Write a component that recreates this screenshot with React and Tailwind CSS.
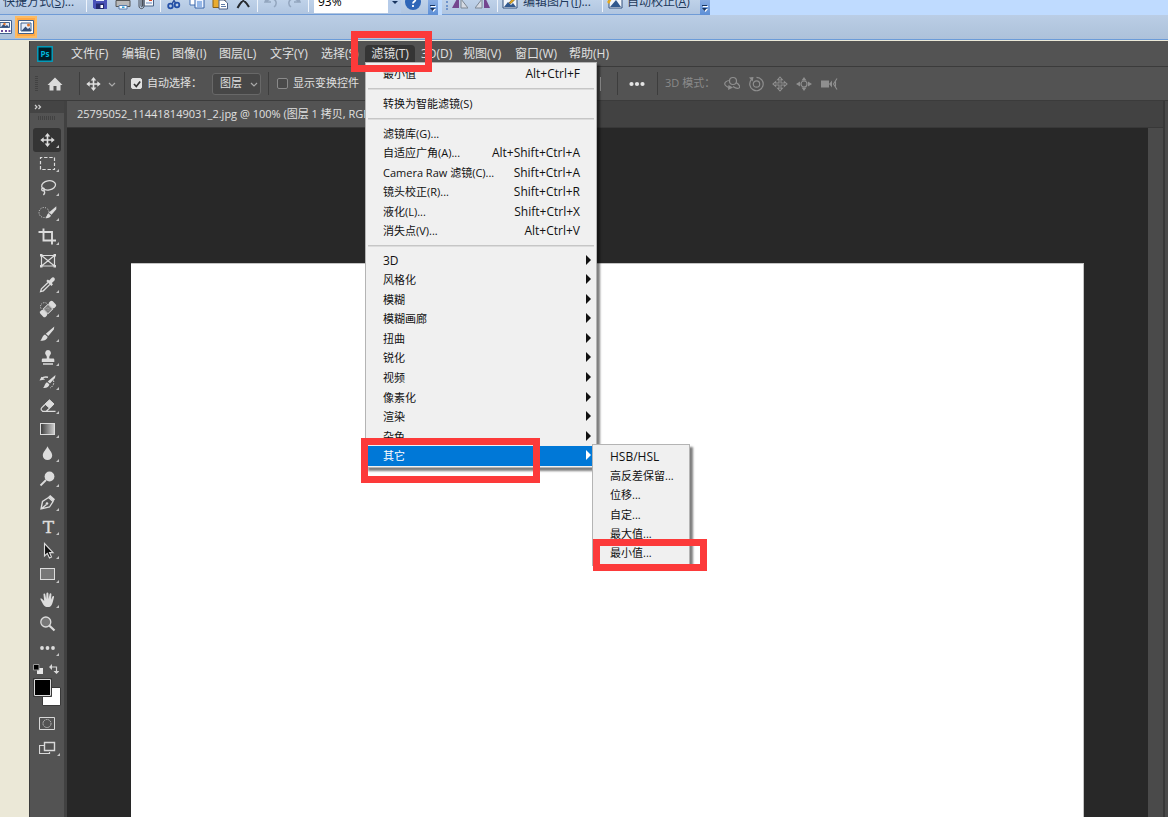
import { useState } from "react";

const menus = [
  { label: "文件(F)", width: "w-[51px]" },
  { label: "编辑(E)", width: "w-[50px]" },
  { label: "图像(I)", width: "w-[47px]" },
  { label: "图层(L)", width: "w-[51px]" },
  { label: "文字(Y)", width: "w-[51px]" },
  { label: "选择(S)", width: "w-[50px]" },
  { label: "滤镜(T)", width: "w-[50px]", open: true },
  { label: "3D(D)", width: "w-[42px]" },
  { label: "视图(V)", width: "w-[52px]" },
  { label: "窗口(W)", width: "w-[54px]" },
  { label: "帮助(H)", width: "w-[54px]" },
];

const filterCommands = [
  ["滤镜库(G)...", ""],
  ["自适应广角(A)...", "Alt+Shift+Ctrl+A"],
  ["Camera Raw 滤镜(C)...", "Shift+Ctrl+A"],
  ["镜头校正(R)...", "Shift+Ctrl+R"],
  ["液化(L)...", "Shift+Ctrl+X"],
  ["消失点(V)...", "Alt+Ctrl+V"],
];

const filterGroups = ["3D", "风格化", "模糊", "模糊画廊", "扭曲", "锐化", "视频", "像素化", "渲染", "杂色", "其它"];

const otherCommands = ["HSB/HSL", "高反差保留...", "位移...", "自定...", "最大值...", "最小值..."];

const moveGlyph = (
  <>
    <path d="M12.5 7v10M7.5 12h10" stroke="currentColor" strokeWidth="1.6" />
    <path d="M12.5 5l2.8 3.4h-5.6zM12.5 19l2.8-3.4h-5.6zM5.3 12l3.4-2.8v5.6zM19.7 12l-3.4-2.8v5.6z" fill="currentColor" />
  </>
);

const tools = [
  { name: "移动工具", glyph: moveGlyph, active: true },
  {
    name: "矩形选框工具",
    glyph: <rect x="5.5" y="5.5" width="14" height="12" fill="none" stroke="currentColor" strokeWidth="1.2" strokeDasharray="3.4 1.8" strokeDashoffset="1.6" />,
  },
  {
    name: "套索工具",
    glyph: (
      <g fill="none" stroke="currentColor" strokeWidth="1.3">
        <ellipse cx="13.6" cy="9.4" rx="7" ry="4.6" transform="rotate(-10 13.6 9.4)" />
        <path d="M7.5 12c-1.6 1.4-.6 3.2 1 2.7 1.6-.6 1-2.6-.8-2.7M9 14.5c1 1.5.8 3.2-.6 4.5" />
      </g>
    ),
  },
  {
    name: "快速选择工具",
    glyph: (
      <>
        <circle cx="9" cy="11.5" r="5" fill="none" stroke="currentColor" strokeDasharray="1 1.4" />
        <path d="M21.3 5.2v3l-4.8 5.6-2.6-2.2zM13.3 12.3l2.6 2.2c-.5 2-2.6 2.9-5.4 2.7 1.6-1.3 1-3.5 2.8-4.9z" fill="currentColor" />
      </>
    ),
  },
  {
    name: "裁剪工具",
    glyph: <path d="M8.5 3.5v12H21M3.5 7H17v12.5" fill="none" stroke="currentColor" strokeWidth="1.9" />,
  },
  {
    name: "图框工具",
    flat: true,
    glyph: (
      <>
        <path d="M6.5 6.5h13V17h-13zM6.5 6.5l13 10.5M19.5 6.5L6.5 17" fill="none" stroke="currentColor" strokeWidth="1.2" />
        <path d="M5 5h2.5v2.5H5zM18.500 5H21v2.500h-2.500zM5 16h2.500v2.500H5zM18.500 16H21v2.500h-2.500z" fill="currentColor" />
      </>
    ),
  },
  {
    name: "吸管工具",
    glyph: (
      <>
        <path d="M13 9.5l-6.6 6.4-.8 2.7 2.7-.8 6.6-6.4" fill="none" stroke="currentColor" strokeWidth="1.3" />
        <path d="M11.3 8l1.5-1.5 1.4 1 2.3-2.6c2-1.6 4.3.6 3 2.7l-2.6 2.5 1 1.4-1.5 1.5z" fill="currentColor" />
      </>
    ),
  },
  {
    name: "污点修复画笔工具",
    glyph: (
      <>
        <path d="M6 11.5c-2-4 2.5-7.5 6-5" fill="none" stroke="currentColor" strokeDasharray="1 1.3" />
        <g transform="rotate(-45 13 12)">
          <rect x="4.2" y="8.2" width="5" height="7.6" rx="1.8" fill="currentColor" />
          <rect x="16.8" y="8.2" width="5" height="7.6" rx="1.8" fill="currentColor" />
          <rect x="9.7" y="8.7" width="6.6" height="6.6" fill="none" stroke="currentColor" />
          <path d="M11.500 10v4M13 10v4M14.500 10v4" stroke="currentColor" strokeDasharray="1 .6" />
        </g>
      </>
    ),
  },
  {
    name: "画笔工具",
    glyph: (
      <path d="M19.3 4.5l-.5 3-5.5 6.5-2.5-2.2zM10 12.5l2.6 2.2c-.3 2.6-3 4.2-7.3 4 2-1.6 1.8-5 4.7-6.2z" fill="currentColor" />
    ),
  },
  {
    name: "仿制图章工具",
    glyph: (
      <path d="M13 4a3 3 0 0 1 2 5.2c-.7.8-.9 1.8-.6 3.3H18c.8 0 1.3.5 1.3 1.2V16H6.800v-2.300c0-.7.5-1.200 1.300-1.200h3.600c.3-1.500.1-2.500-.6-3.300A3 3 0 0 1 13 4zM8 17.200h10v1.500H8z" fill="currentColor" />
    ),
  },
  {
    name: "历史记录画笔工具",
    glyph: (
      <>
        <path d="M20.5 5l-.5 3-5 5.5-2.3-2zM12 12.200l2.400 2.100c-.3 2.500-2.600 4-6.400 3.700 1.700-1.400 1.600-4.700 4-5.800zM4.500 10.500l2-3.700 3.600 2.700z" fill="currentColor" />
        <path d="M6.500 8.500c1.500-1.300 4-1.700 6.500-1.200" fill="none" stroke="currentColor" strokeWidth="1.4" />
        <path d="M18.500 10.500c1 3-.5 6-3.500 7.500" fill="none" stroke="currentColor" strokeDasharray="1.5 1.3" />
      </>
    ),
  },
  {
    name: "橡皮擦工具",
    glyph: (
      <>
        <path d="M14.500 5.800l4.500 4.200-4.200 4.400-4.800-4.400z" fill="currentColor" stroke="currentColor" strokeLinejoin="round" />
        <path d="M10 10.500l-3.200 3.200c-1 1-.8 2 0 2.700l.9 1H11l3.500-3.200M8 17.400h12.500" fill="none" stroke="currentColor" strokeWidth="1.2" />
      </>
    ),
  },
  {
    name: "渐变工具",
    glyph: (
      <>
        <defs>
          <linearGradient id="ramp">
            <stop offset="0" stopColor="#3a3a3a" />
            <stop offset="1" stopColor="#cfcfcf" />
          </linearGradient>
        </defs>
        <rect x="5.5" y="5.5" width="14" height="11" fill="url(#ramp)" stroke="currentColor" />
      </>
    ),
  },
  {
    name: "模糊工具",
    glyph: <path d="M12.5 4.200c1 3 4.700 5.800 4.700 9.200a4.700 4.700 0 0 1-9.400 0c0-3.400 3.700-6.200 4.700-9.200z" fill="currentColor" />,
  },
  {
    name: "减淡工具",
    glyph: (
      <>
        <circle cx="14.5" cy="9.5" r="4.9" fill="currentColor" />
        <path d="M11 13l-5.5 5.5" stroke="currentColor" strokeWidth="1.8" />
      </>
    ),
  },
  {
    name: "钢笔工具",
    glyph: (
      <>
        <path d="M6 18l1.5-7.5 6-4 4.5 4-3.500 5.500zM6 18l5.500-4.500" fill="none" stroke="currentColor" strokeWidth="1.3" />
        <circle cx="12" cy="12.5" r="1.3" fill="currentColor" />
        <path d="M13.3 5.700l2-1.700 4.700 4.300-1.700 2.200z" fill="currentColor" />
      </>
    ),
  },
  {
    name: "横排文字工具",
    glyph: (
      <text x="13.3" y="17.5" textAnchor="middle" fill="currentColor" stroke="currentColor" strokeWidth=".4" fontSize="17" fontFamily="DejaVu Serif, serif">
        T
      </text>
    ),
  },
  {
    name: "路径选择工具",
    glyph: <path d="M9.5 4.5V17l2.800-2.600 2.200 4.600 2-1-2-4.400h3.600z" fill="#111" stroke="currentColor" strokeWidth="1.1" />,
  },
  {
    name: "矩形工具",
    glyph: <rect x="5.5" y="5.5" width="14" height="11" fill="#777" stroke="currentColor" />,
  },
  {
    name: "抓手工具",
    glyph: (
      <path d="M5.200 10.800c.9-.8 1.800-.3 2.500.6L9.200 13l-.7-6.300c-.1-1.300 1.500-1.500 1.800-.3l.9 4.600.2-5.600c.1-1.300 1.900-1.300 2 0l.2 5.500 1-4.800c.3-1.200 1.900-.9 1.800.4l-.4 5.200 1.400-3.200c.6-1 1.900-.5 1.600.7-.7 2.600-1 4.600-2 7-.8 1.900-2.200 2.900-4 2.900-2.300 0-3.800-1-4.900-2.900-.9-1.700-2-3.600-2.900-5.400z" fill="currentColor" />
    ),
  },
  {
    name: "缩放工具",
    flat: true,
    glyph: (
      <>
        <circle cx="10.8" cy="10" r="5" fill="#777" stroke="currentColor" strokeWidth="1.3" />
        <path d="M14.500 13.800l5 4.700" stroke="currentColor" strokeWidth="2.2" />
      </>
    ),
  },
  {
    name: "编辑工具栏",
    glyph: (
      <g fill="currentColor">
        <circle cx="7" cy="12" r="1.9" />
        <circle cx="12.5" cy="12" r="1.9" />
        <circle cx="18" cy="12" r="1.9" />
      </g>
    ),
  },
];

function Glyph({ children, className = "size-4", box = 16 }) {
  return (
    <svg viewBox={`0 0 ${box} ${box}`} className={`shrink-0 ${className}`} fill="none" aria-hidden="true">
      {children}
    </svg>
  );
}

function IconButton({ label, children }) {
  return (
    <button type="button" aria-label={label} className="flex h-6 w-[23px] items-center justify-center">
      <Glyph>{children}</Glyph>
    </button>
  );
}

function BarRule() {
  return <div className="mr-px ml-[3px] h-5 w-px bg-[#eef4fc]" />;
}

function BarEnd() {
  return (
    <button type="button" aria-label="工具栏选项" className="ml-1 flex h-[26px] w-2.5 items-end justify-center bg-linear-to-b from-[#a9c3ec] to-[#5d8fd6] pb-0.5">
      <svg viewBox="0 0 8 8" className="size-2" aria-hidden="true">
        <path d="M2 1h5v1H2zM2 4h5L4.5 7z" fill="#fff" />
        <path d="M1 0h5v1H1zM1 3h5L3.5 6z" fill="#17335f" />
      </svg>
    </button>
  );
}

function HostToolbar() {
  const [zoom, setZoom] = useState("93%");

  return (
    <div className="flex h-[15px] items-end gap-1 overflow-hidden bg-[#bfdbff] text-xs text-[#1e395b]">
      <div className="flex h-[26px] shrink-0 items-center border-b border-[#6f9bd6] bg-linear-to-b from-[#cbdcf0] to-[#b0c5e0]">
        <button type="button" className="w-[83px] pl-[3px] text-left whitespace-nowrap">
          快捷方式(<u>S</u>)...
        </button>
        <BarRule />
        <IconButton label="保存">
          <path d="M1 1h14v14H2.500L1 13.500z" fill="#4a52b8" />
          <path d="M4 1h8v6H4z" fill="#e4e9fa" />
          <path d="M4 9.500h8V15H4z" fill="#23286e" />
          <path d="M8.500 11H11v3H8.500z" fill="#fff" />
        </IconButton>
        <IconButton label="打印">
          <path d="M4 1h8v6H4z" fill="#fff" stroke="#777" />
          <path d="M1 6.500h14v6H1z" fill="#b9b9b9" stroke="#555" />
          <path d="M4 11.500h8V15H4z" fill="#fff" stroke="#5a7fae" />
          <path d="M7 12.500h2.500V14H7z" fill="#2aa0d8" />
        </IconButton>
        <IconButton label="发送">
          <path d="M6 2h9.500v10H6z" fill="#f4f7fc" stroke="#4b6486" />
          <path d="M11 4h3v3h-3z" fill="#d6472b" />
          <path d="M8 9h6" stroke="#6b8cc0" />
          <path d="M1 4v8c0 3.500 5 3.500 5 0V3M3 5v7c0 1 1.500 1 1.500 0V5" stroke="#4a4f58" />
        </IconButton>
        <BarRule />
        <IconButton label="剪切">
          <path d="M5 1l5 9M11 1l-5 9" stroke="#2b4f9c" strokeWidth="1.5" />
          <circle cx="4.5" cy="12" r="2.3" stroke="#2450a8" strokeWidth="1.8" />
          <circle cx="11" cy="11" r="2.3" stroke="#2450a8" strokeWidth="1.8" />
        </IconButton>
        <IconButton label="复制">
          <path d="M1 1h9v10H1z" fill="#fff" stroke="#4470b4" />
          <path d="M6 4h9v10H6z" fill="#eef4ff" stroke="#3562a8" />
          <path d="M8 8h5M8 10h5M8 12h5" stroke="#3c7ad0" />
        </IconButton>
        <IconButton label="粘贴">
          <path d="M1 1h12v12.500H1z" fill="#e9ab2f" stroke="#8c5f12" />
          <path d="M7 6h5l3.500 3v6H7z" fill="#fff" stroke="#4b5f86" />
          <path d="M9 10.500h4M9 12.500h5" stroke="#5f7ba8" />
        </IconButton>
        <IconButton label="删除">
          <path d="M3 2c4 2.500 8 6 11 11M13 2C9 5 5 9 2.500 14" stroke="#26292e" strokeWidth="2" />
        </IconButton>
        <BarRule />
        <IconButton label="撤消">
          <path d="M4 3L2 8h6M3 8c3-4 9-4 10 0 .5 2-.5 4-2 5" stroke="#93a6bf" strokeWidth="1.5" />
        </IconButton>
        <IconButton label="重做">
          <path d="M12 3l2 5H8M13 8c-3-4-9-4-10 0-.5 2 .5 4 2 5" stroke="#93a6bf" strokeWidth="1.5" />
        </IconButton>
        <BarRule />
        <div className="ml-1 flex h-[22px] w-[87px] items-center bg-white">
          <input
            type="text"
            aria-label="显示比例"
            value={zoom}
            onChange={(event) => setZoom(event.target.value)}
            className="w-[74px] pl-1 text-black outline-none"
          />
          <button type="button" aria-label="选择比例" className="flex h-full w-[13px] items-center justify-center bg-[#b5cbe9]">
            <Glyph className="size-2" box={8}>
              <path d="M1 3h6L4 6z" fill="#17335f" />
            </Glyph>
          </button>
        </div>
        <IconButton label="帮助">
          <circle cx="8" cy="8" r="8" fill="#2f66b8" />
          <path d="M5.500 5.500c0-3 5-3 5 0 0 2-2.500 2-2.500 4M8 11v2" stroke="#fff" strokeWidth="1.8" />
        </IconButton>
        <BarEnd />
      </div>

      <div className="flex h-[26px] shrink-0 items-center border-b border-[#6f9bd6] bg-linear-to-b from-[#cbdcf0] to-[#b0c5e0]">
        <div className="ml-1 h-4 w-0.5 border-l-2 border-dotted border-[#6f94cc]" />
        <IconButton label="向左旋转">
          <path d="M7 1v13H0z" fill="#74468f" />
          <path d="M9 5l7 9H9z" fill="#d5dae3" stroke="#7d8794" />
        </IconButton>
        <IconButton label="向右旋转">
          <path d="M9 1l6 13H9z" fill="#74468f" />
          <path d="M7 5v9H0z" fill="#d5dae3" stroke="#7d8794" />
        </IconButton>
        <BarRule />
        <button type="button" className="flex w-[100px] items-center gap-[5px] pl-[3px] whitespace-nowrap">
          <Glyph>
            <path d="M1 1h14v13H1z" fill="#f2f6fc" stroke="#33507c" />
            <path d="M2 13l4-5 3 3 2-2 3 4z" fill="#31588e" />
            <path d="M7 9l6-7 2 1.500-6 6z" fill="#e8a91c" stroke="#5b4a16" strokeWidth=".6" />
          </Glyph>
          <span>
            编辑图片(<u>I</u>)...
          </span>
        </button>
        <BarRule />
        <button type="button" className="flex w-[92px] items-center gap-1 pl-[3px] whitespace-nowrap">
          <Glyph>
            <path d="M2 1h13v13H2z" fill="#f2f6fc" stroke="#33507c" />
            <path d="M3 13l6-7 5 7z" fill="#31588e" />
            <path d="M0 8l4-5 1 2-3 5z" fill="#e8a91c" />
          </Glyph>
          <span>
            自动校正(<u>A</u>)
          </span>
        </button>
        <BarEnd />
      </div>
    </div>
  );
}

function ViewToolbar() {
  return (
    <div className="flex h-[25px] shrink-0 items-center border-b border-[#6b9bd8] bg-linear-to-b from-[#bacde5] to-[#adc1da]">
      <button type="button" aria-label="缩略图视图" className="flex h-full w-[15px] items-center justify-end pr-[3px]">
        <svg viewBox="0 0 12 14" className="h-3.5 w-3" aria-hidden="true">
          <path d="M-3 .5h14.500v13H-3z" fill="#fff" stroke="#41608c" />
          <path d="M0 2.500h9.500v5H0z" fill="#dfe9f7" stroke="#41608c" />
          <path d="M1 7l2.500-3 2 2L7 5l2 2z" fill="#33507c" />
          <circle cx="4.5" cy="4" r="1.2" fill="#e2762c" />
          <path d="M1 10h2v2H1zM5 10h2v2H5zM8.500 10h2v2h-2z" fill="#6a4a9c" />
        </svg>
      </button>
      <button type="button" aria-label="图片视图" className="flex h-[22px] w-[22px] items-center justify-center border-2 border-[#fdbb62] bg-[#ffa845]">
        <svg viewBox="0 0 16 14" className="h-3.5 w-4" aria-hidden="true">
          <path d="M.5.5h15v13H.5z" fill="#fff" stroke="#41608c" />
          <path d="M3 3h10v8H3z" fill="#e6eefa" stroke="#41608c" />
          <path d="M3.500 11l4-4.500L10 9l1.500-1.500 2 3.500z" fill="#33507c" />
          <circle cx="10.5" cy="5" r="1.5" fill="#e2762c" />
        </svg>
      </button>
    </div>
  );
}

function MenuRule() {
  return <div role="separator" className="mx-[2px] my-1 h-0.5 border-t border-[#c6c6c6] bg-[#dcdcdc]" />;
}

function MenuItem({ label, shortcut, arrow, selected, latin }) {
  return (
    <button
      type="button"
      role="menuitem"
      className={`mx-[2px] flex min-h-0 items-center justify-between pl-[15px] whitespace-pre ${arrow ? "pr-[3px]" : "pr-3.5"} ${
        selected ? "bg-[#0078d7] text-white" : ""
      }`}
    >
      <span className={latin ? "text-xs leading-4" : ""}>{label}</span>
      {shortcut && <span className="text-xs leading-4">{shortcut}</span>}
      {arrow && (
        <svg viewBox="0 0 5 10" className="mb-0.5 h-2.5 w-[5px]" aria-hidden="true">
          <path d="M0 0l5 5-5 5z" fill="currentColor" />
        </svg>
      )}
    </button>
  );
}

function FilterMenu() {
  return (
    <div
      role="menu"
      aria-label="滤镜"
      className="absolute top-full left-0 z-10 flex w-[232px] flex-col border border-[#b4b4b4] bg-[#f0f0f0] py-px text-[11px] leading-4 text-[#111] shadow-[3px_3px_2px_rgba(0,0,0,0.5)]"
    >
      <div className="grid h-5">
        <MenuItem label="最小值" shortcut="Alt+Ctrl+F" />
      </div>
      <MenuRule />
      <div className="grid h-5">
        <MenuItem label="转换为智能滤镜(S)" />
      </div>
      <MenuRule />
      <div className="grid h-[117px] auto-rows-fr">
        {filterCommands.map(([label, shortcut]) => (
          <MenuItem key={label} label={label} shortcut={shortcut} />
        ))}
      </div>
      <MenuRule />
      <div className="grid h-[215px] auto-rows-fr">
        {filterGroups.map((label) => (
          <MenuItem key={label} label={label} arrow selected={label === "其它"} latin={label === "3D"} />
        ))}
      </div>
      <div
        role="menu"
        aria-label="其它"
        className="absolute top-[381px] left-[226px] grid h-[122px] w-[98px] auto-rows-fr border border-[#b4b4b4] bg-[#f0f0f0] py-0.5 shadow-[3px_3px_2px_rgba(0,0,0,0.5)]"
      >
        {otherCommands.map((label) => (
          <MenuItem key={label} label={label} latin={label === "HSB/HSL"} />
        ))}
      </div>
    </div>
  );
}

function MenuBar() {
  return (
    <nav className="flex h-[25px] shrink-0 items-center pl-[7px] text-xs text-[#e0e0e0]">
      <svg viewBox="0 0 16 16" className="mr-[18px] size-4 shrink-0" aria-hidden="true">
        <rect x=".8" y=".8" width="14.4" height="14.4" fill="#001d26" stroke="#00a3c4" strokeWidth="1.4" />
        <text x="8" y="11" textAnchor="middle" fontSize="8" fontWeight="bold" fill="#00b8dc">
          Ps
        </text>
      </svg>
      {menus.map(({ label, width, open }) => (
        <div key={label} className={`relative shrink-0 ${width} ${open ? "-ml-1.5 mr-1.5" : ""}`}>
          <button type="button" aria-expanded={open} className={`block h-[17px] whitespace-nowrap ${open ? "w-full rounded-t-sm bg-[#353535]" : ""}`}>
            {label}
          </button>
          {open && <FilterMenu />}
        </div>
      ))}
    </nav>
  );
}

function OptionRule({ className = "" }) {
  return <div className={`h-[23px] w-px shrink-0 bg-[#3d3d3d] ${className}`} />;
}

function CheckOption({ label, checked, onChange }) {
  return (
    <label className="flex shrink-0 items-center gap-[5px] whitespace-nowrap">
      <span className="grid size-[11px] place-items-center">
        <input
          type="checkbox"
          checked={checked}
          onChange={onChange}
          className="col-start-1 row-start-1 size-[11px] appearance-none rounded-xs border border-[#8a8a8a] bg-[#4a4a4a] checked:border-[#e2e2e2] checked:bg-[#e2e2e2]"
        />
        {checked && (
          <svg viewBox="0 0 10 10" className="pointer-events-none col-start-1 row-start-1 size-2.5" aria-hidden="true">
            <path d="M2 5l2.300 2.500L8.200 2.500" fill="none" stroke="#333" strokeWidth="1.7" />
          </svg>
        )}
      </span>
      {label}
    </label>
  );
}

function Mode3dIcons() {
  return (
    <div className="ml-[9px] flex shrink-0 items-center gap-2 text-[#8f8f8f]">
      <Glyph>
        <circle cx="9" cy="5" r="3.5" stroke="currentColor" strokeWidth="1.2" />
        <path d="M6 4.500C2 4.500-.5 7 1.500 9.500c1 1.300 3 2 5.500 2.200M12 6.500c3.500 2 4.500 4.500 3 5.500-1.500.8-4 0-6-1.500" stroke="currentColor" strokeWidth="1.2" />
        <path d="M4.500 9L9 11.500 4 14z" fill="currentColor" />
      </Glyph>
      <Glyph>
        <circle cx="8.5" cy="8" r="3.2" stroke="currentColor" strokeWidth="1.2" />
        <path d="M3.500 3.500a6.700 6.700 0 1 0 5-2.200" stroke="currentColor" strokeWidth="1.2" />
        <path d="M1 1.500L5.500 1l-.8 4.500z" fill="currentColor" />
      </Glyph>
      <Glyph>
        <path
          d="M8 1l2.300 2.600H9V7h3.400V5.700L15 8l-2.600 2.300V9H9v3.400h1.300L8 15l-2.300-2.600H7V9H3.600v1.300L1 8l2.600-2.300V7H7V3.600H5.700z"
          stroke="currentColor"
          strokeWidth="1.1"
        />
      </Glyph>
      <Glyph>
        <circle cx="8" cy="8" r="3" stroke="currentColor" strokeWidth="1.2" />
        <path d="M8 1l2.500 3.500h-5zM8 15l2.500-3.500h-5zM0 8l4-2.500v5zM16 8l-4-2.500v5z" fill="currentColor" />
      </Glyph>
      <Glyph className="h-4 w-[18px]" box={16}>
        <path d="M0 4.500h8v7H0zM8 8l3-3.500v7z" fill="currentColor" />
        <path d="M16 2.500L12.500 8l3.500 5.500M14.500 5.500v5" stroke="currentColor" strokeWidth="1.1" />
      </Glyph>
    </div>
  );
}

function OptionsBar() {
  const [autoSelect, setAutoSelect] = useState(true);
  const [showTransform, setShowTransform] = useState(false);
  const [target, setTarget] = useState("图层");

  return (
    <div className="flex h-[34px] shrink-0 items-center border-t border-[#3b3b3b] pl-[5px] text-[11px] text-[#e0e0e0]">
      <div className="h-4 w-[3px] bg-[repeating-linear-gradient(to_bottom,#424242_0_1px,transparent_1px_2px)]" />
      <button type="button" aria-label="主页" className="ml-[9px]">
        <Glyph className="size-4">
          <path d="M8 1.500L.5 9h2v5.500h4V10h3v4.500h4V9h2z" fill="#dcdcdc" />
        </Glyph>
      </button>
      <OptionRule className="ml-4" />
      <button type="button" aria-label="工具预设" className="ml-px flex items-center gap-[3px]">
        <Glyph className="size-6" box={24}>
          {moveGlyph}
        </Glyph>
        <Glyph className="size-2" box={8}>
          <path d="M1 3l3 3 3-3" stroke="#aaa" strokeWidth="1.2" />
        </Glyph>
      </button>
      <OptionRule className="mr-1.5 ml-2" />
      <CheckOption label="自动选择：" checked={autoSelect} onChange={() => setAutoSelect(!autoSelect)} />
      <div className="ml-2.5 grid h-[22px] w-[49px] shrink-0 items-center">
        <select
          aria-label="自动选择对象"
          value={target}
          onChange={(event) => setTarget(event.target.value)}
          className="col-start-1 row-start-1 h-[22px] appearance-none rounded-[3px] border border-[#686868] bg-[#474747] pl-[7px]"
        >
          <option>图层</option>
          <option>组</option>
        </select>
        <Glyph className="pointer-events-none col-start-1 row-start-1 mr-[3px] size-2 justify-self-end" box={8}>
          <path d="M1 3l3 3 3-3" stroke="#aaa" strokeWidth="1.2" />
        </Glyph>
      </div>
      <OptionRule className="mr-2 ml-[7px]" />
      <CheckOption label="显示变换控件" checked={showTransform} onChange={() => setShowTransform(!showTransform)} />
      <div className="ml-[241px] h-3.5 w-px shrink-0 bg-[#9a9a9a]" />
      <OptionRule className="ml-4" />
      <button type="button" aria-label="更多选项" className="ml-[11px]">
        <svg viewBox="0 0 16 6" className="h-1.5 w-4" aria-hidden="true">
          <g fill="#e4e4e4">
            <circle cx="2.5" cy="3" r="2.1" />
            <circle cx="8" cy="3" r="2.1" />
            <circle cx="13.5" cy="3" r="2.1" />
          </g>
        </svg>
      </button>
      <OptionRule className="ml-3" />
      <span className="ml-[7px] shrink-0 whitespace-nowrap text-[#8a8a8a]">3D 模式：</span>
      <Mode3dIcons />
    </div>
  );
}

function Swatches() {
  return (
    <div className="flex flex-col items-center text-[#d8d8d8]">
      <div className="flex w-full justify-between px-[3px] pt-1">
        <button type="button" aria-label="默认前景色和背景色">
          <Glyph className="size-2.5" box={10}>
            <path d="M4 4h6v6H4z" fill="#e6e6e6" />
            <path d="M.5.5H6V6H.5z" fill="#000" stroke="#999" />
          </Glyph>
        </button>
        <button type="button" aria-label="切换前景色和背景色" className="mr-0.5">
          <Glyph className="size-2.5" box={10}>
            <path d="M2 3h5.500v5" stroke="currentColor" strokeWidth="1.2" />
            <path d="M0 3l3-3v6zM7.500 10l-3-3h6z" fill="currentColor" />
          </Glyph>
        </button>
      </div>
      <svg viewBox="0 0 28 29" className="mt-1 h-[29px] w-7" aria-hidden="true">
        <path d="M9.500 9.500h18v18h-18z" fill="#fff" stroke="#3a3a3a" />
        <path d="M.5.5h18v18H.5z" fill="#000" stroke="#3a3a3a" />
        <path d="M1.500 1.500h16v16h-16z" stroke="#dcdcdc" />
      </svg>
      <button type="button" aria-label="快速蒙版" className="mt-2.5">
        <svg viewBox="0 0 16 13" className="h-[13px] w-4" fill="none" aria-hidden="true">
          <path d="M.5.5h15v12H.5z" stroke="currentColor" />
          <circle cx="8" cy="6.500" r="4" stroke="currentColor" strokeDasharray="1.2 1" />
        </svg>
      </button>
      <button type="button" aria-label="屏幕模式" className="mt-[11px] ml-1">
        <svg viewBox="0 0 21 16" className="h-4 w-[21px]" fill="none" aria-hidden="true">
          <path d="M5 4.500H.5v8h10V11" stroke="currentColor" strokeWidth="1.2" />
          <path d="M5.500 1.500h10v8h-10z" stroke="currentColor" strokeWidth="1.4" />
          <path d="M21 12v3h-3z" fill="#c4c4c4" />
        </svg>
      </button>
    </div>
  );
}

function ToolPanel() {
  return (
    <aside className="flex w-[37px] shrink-0 flex-col border-r-[3px] border-[#414141] bg-[#535353]">
      <div className="flex h-3 items-center bg-[#444] pl-1 text-[#d0d0d0]">
        <Glyph className="size-2" box={8}>
          <path d="M1 2l2 2-2 2M4.500 2l2 2-2 2" stroke="currentColor" strokeWidth="1.2" />
        </Glyph>
      </div>
      <div className="mx-auto mt-[3px] h-1 w-[18px] bg-[repeating-linear-gradient(to_right,#424242_0_1px,transparent_1px_2px)]" />
      <div className="mt-2 grid h-[532px] auto-rows-fr text-[#dcdcdc]">
        {tools.map(({ name, glyph, active, flat }) => (
          <button
            key={name}
            type="button"
            aria-label={name}
            className={`mx-[3px] flex min-h-0 items-center justify-center rounded-[3px] ${active ? "bg-[#343434]" : ""}`}
          >
            <Glyph className="size-6" box={24}>
              {glyph}
              {!flat && <path d="M24 17v3h-3z" fill="#c4c4c4" />}
            </Glyph>
          </button>
        ))}
      </div>
      <Swatches />
    </aside>
  );
}

function Workspace() {
  return (
    <div className="flex min-h-0 flex-1 border-t border-[#3b3b3b]">
      <ToolPanel />
      <main className="flex min-w-0 flex-1 flex-col">
        <div className="flex h-[27px] shrink-0 items-center border-b border-[#383838] bg-[#424242]">
          <button type="button" className="h-full bg-[#535353] pr-6 pl-2.5 text-[11px] whitespace-nowrap text-[#e0e0e0]">
            25795052_114418149031_2.jpg @ 100% (图层 1 拷贝, RGB/8#)
          </button>
        </div>
        <div className="flex min-h-0 flex-1">
          <div className="flex flex-1 bg-[#282828] px-16 pt-[135px]">
            <div className="flex-1 border-t border-r border-[#c4c4c4] bg-white" />
          </div>
          <div className="w-[15px] bg-[#4a4a4a]" />
        </div>
      </main>
      <div className="w-0.5 bg-[#383838]" />
      <div className="w-[3px] bg-[#4a4a4a]" />
    </div>
  );
}

export default function App() {
  return (
    <div className="relative flex h-screen flex-col overflow-hidden bg-[#ebe8d7] font-['Open_Sans','Noto_Sans_CJK_SC',sans-serif]">
      <HostToolbar />
      <ViewToolbar />
      <div className="mt-px flex min-h-0 flex-1 pl-[29px]">
        <div className="flex min-w-0 flex-1 flex-col border-l border-[#3b3b3b] bg-[#535353]">
          <MenuBar />
          <OptionsBar />
          <Workspace />
        </div>
      </div>
      <div className="absolute top-[31px] left-[351px] z-20 h-[41px] w-[81px] border-[7px] border-[#fc3a3a]" />
      <div className="absolute top-[438px] left-[361px] z-20 h-[45px] w-[179px] border-[7px] border-[#fc3a3a]" />
      <div className="absolute top-[539px] left-[593px] z-20 h-8 w-[114px] border-[7px] border-[#fc3a3a]" />
    </div>
  );
}
